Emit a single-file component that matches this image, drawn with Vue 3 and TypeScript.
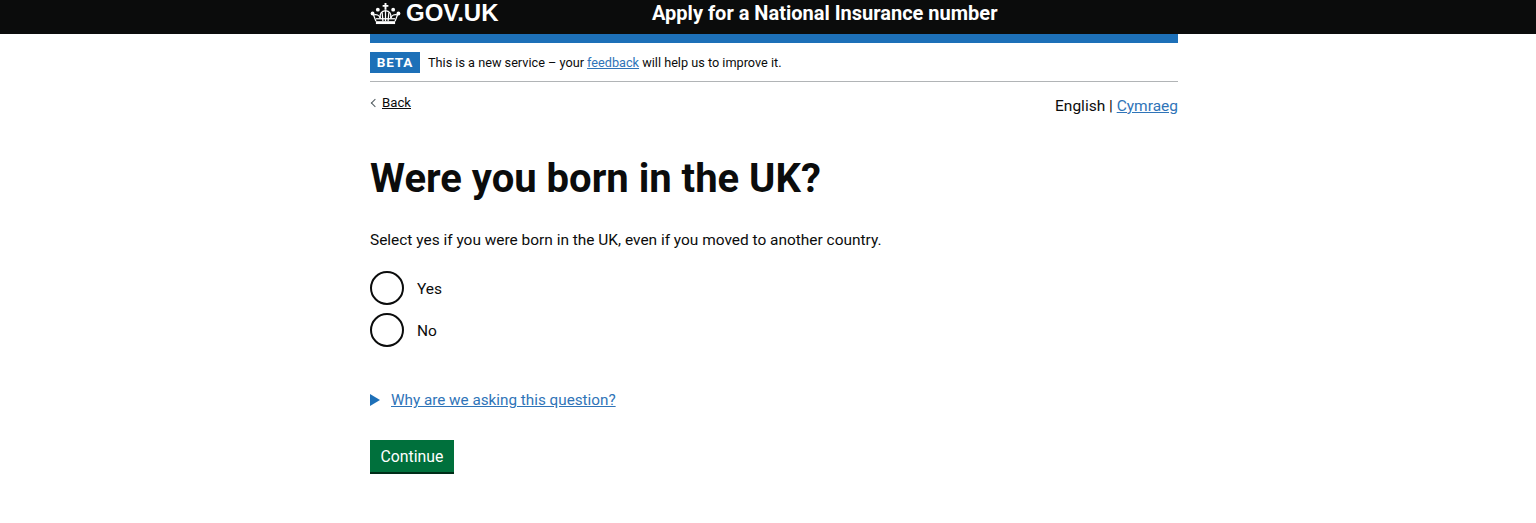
<template>
  <div class="page">
    <header class="header">
      <div class="container header-inner">
        <a class="logo">
          <svg class="crown" viewBox="0 0 32 24" width="31" height="23" aria-hidden="true">
            <g fill="none" stroke="#fff" stroke-width="1.300">
              <path d="M6 20 3.500 13.500c3-1 6 0 7 3.500M26 20l2.500-6.500c-3-1-6 0-7 3.500" />
              <path d="M10.500 17C9.500 12 12 9.500 16 9c4 .5 6.500 3 5.500 8" />
              <path d="M16 9v11M12.500 11l.8 9M19.500 11l-.8 9" />
              <path d="M6 17.500h20" />
            </g>
            <rect x="6" y="20" width="20" height="3" fill="#fff" />
            <g fill="#fff">
              <path d="M15 1h2v2h2v2h-2v3h-2V5h-2V3h2z" />
              <circle cx="8" cy="8" r="2" />
              <circle cx="24" cy="8" r="2" />
              <circle cx="2.500" cy="12" r="2" />
              <circle cx="29.500" cy="12" r="2" />
            </g>
          </svg>
          <span>GOV.UK</span>
        </a>
        <span class="service">Apply for a National Insurance number</span>
      </div>
    </header>

    <div class="container">
      <div class="blue-bar"></div>
      <div class="phase">
        <strong class="tag">BETA</strong>
        <span>This is a new service – your <a class="link">feedback</a> will help us to improve it.</span>
      </div>

      <div class="nav-row">
        <a class="back"><span class="chevron"></span>Back</a>
        <div class="lang">English | <a class="link">Cymraeg</a></div>
      </div>

      <main>
        <h1>Were you born in the UK?</h1>
        <p class="hint">Select yes if you were born in the UK, even if you moved to another country.</p>

        <div class="radios">
          <label v-for="option in options" :key="option" class="radio">
            <span class="circle"></span>
            <span class="radio-label">{{ option }}</span>
          </label>
        </div>

        <div class="details">
          <span class="arrow"></span>
          <a class="link">Why are we asking this question?</a>
        </div>

        <button class="continue" type="button">Continue</button>
      </main>
    </div>
  </div>
</template>

<script setup lang="ts">
const options: string[] = ['Yes', 'No'];
</script>

<style>
html,
body {
  margin: 0;
  background: #fff;
}
</style>

<style scoped>
.page {
  font-family: Roboto, Arial, sans-serif;
  color: #0b0c0c;
  height: 523px;
  overflow: hidden;
}

.container {
  width: 808px;
  margin-left: 370px;
}

.header {
  background: #0b0c0c;
  height: 34px;
  color: #fff;
}

.header-inner {
  display: flex;
  align-items: center;
  height: 26px;
}

.logo {
  display: flex;
  align-items: center;
  gap: 5px;
  width: 282px;
  font-size: 24px;
  font-weight: 700;
  font-family: "Liberation Sans", Arial, sans-serif;
}

.service {
  font-size: 20px;
  font-weight: 700;
}

.blue-bar {
  height: 9px;
  background: #1d70b8;
}

.phase {
  display: flex;
  align-items: center;
  gap: 8px;
  height: 38px;
  border-bottom: 1px solid #b1b4b6;
  font-size: 12.700px;
}

.tag {
  background: #1d70b8;
  color: #fff;
  font-size: 13.500px;
  line-height: 21px;
  width: 50px;
  text-align: center;
  letter-spacing: 0.8px;
}

.link {
  color: #2f74b8;
  text-decoration: underline;
}

.nav-row {
  display: flex;
  justify-content: space-between;
  align-items: flex-start;
}

.back {
  display: flex;
  align-items: center;
  margin-top: 12px;
  font-size: 13.200px;
  line-height: 18px;
  text-decoration: underline;
}

.chevron {
  width: 5px;
  height: 5px;
  border-left: 1px solid #505a5f;
  border-bottom: 1px solid #505a5f;
  transform: rotate(45deg);
  margin: 0 4px 0 2px;
}

.lang {
  margin-top: 14px;
  font-size: 15.500px;
  line-height: 20px;
}

h1 {
  font-size: 40px;
  line-height: 48px;
  font-weight: 700;
  margin: 39px 0 0;
}

.hint {
  font-size: 15.450px;
  line-height: 20px;
  margin: 27px 0 0;
}

.radios {
  display: flex;
  flex-direction: column;
  gap: 8px;
  margin-top: 21px;
}

.radio {
  display: flex;
  align-items: center;
  gap: 13px;
  font-size: 15.500px;
}

.radio-label {
  padding-top: 2px;
}

.circle {
  width: 34px;
  height: 34px;
  box-sizing: border-box;
  border: 2px solid #0b0c0c;
  border-radius: 50%;
}

.details {
  display: flex;
  align-items: center;
  gap: 11px;
  margin-top: 43px;
  font-size: 15.250px;
  line-height: 20px;
}

.arrow {
  width: 0;
  height: 0;
  border-left: 10px solid #1d70b8;
  border-top: 6px solid transparent;
  border-bottom: 6px solid transparent;
}

.continue {
  display: block;
  margin-top: 30px;
  width: 84px;
  height: 34px;
  padding: 0;
  border: 0;
  border-bottom: 2px solid #002d18;
  background: #00703c;
  color: #fff;
  font-family: inherit;
  font-size: 15.800px;
}
</style>
